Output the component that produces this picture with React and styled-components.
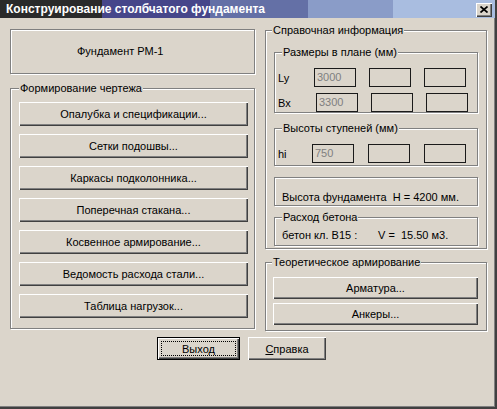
import React from 'react';
import styled, { createGlobalStyle } from 'styled-components';

const GlobalStyle = createGlobalStyle`
  html, body {
    margin: 0;
    padding: 0;
    background: #dbd5cb;
  }
  body {
    font-family: "Liberation Sans", Arial, sans-serif;
    font-size: 11px;
    color: #000;
  }
  * { box-sizing: border-box; }
`;

const face = '#dbd5cb';

const Window = styled.div`
  width: 497px;
  height: 409px;
  background: ${face};
  border-right: 2px solid #404040;
  border-bottom: 2px solid #404040;
  box-shadow: inset -1px -1px 0 #808080;
  display: flex;
  flex-direction: column;
`;

const TitleBar = styled.div`
  height: 18px;
  flex-shrink: 0;
  display: flex;
  align-items: center;
  justify-content: space-between;
  padding: 0 3px 0 6px;
  color: #fff;
  font-weight: bold;
  font-size: 12px;
  background: linear-gradient(
    to right,
    #2a2a2a 0px, #2a2a2a 102px,
    #46468a 102px, #46468a 210px,
    #6470a6 210px, #6470a6 308px,
    #8a9cc8 308px, #8a9cc8 393px,
    #a9bde0 393px
  );
`;

const CloseButton = styled.div`
  width: 16px;
  height: 14px;
  margin-top: 1px;
  background: ${face};
  box-shadow: inset 1px 1px 0 #fff, inset -1px -1px 0 #404040, inset -2px -2px 0 #808080;
  display: flex;
  align-items: center;
  justify-content: center;
`;

const Body = styled.div`
  padding: 11px 0 0 10px;
  display: flex;
  flex-direction: column;
`;

const Columns = styled.div`
  display: grid;
  grid-template-columns: 245px 222px;
  column-gap: 10px;
  align-items: start;
`;

const Column = styled.div`
  display: flex;
  flex-direction: column;
  gap: ${p => p.$gap}px;
`;

const Etched = styled.div`
  position: relative;
  border: 1px solid #808080;
  box-shadow: inset 1px 1px 0 #fff, 1px 1px 0 #fff;
`;

const InfoBox = styled(Etched)`
  height: 45px;
  display: flex;
  align-items: center;
  padding-left: 66px;
  padding-bottom: 1px;
`;

const Group = styled(Etched)`
  height: ${p => p.$h}px;
  padding: ${p => p.$pad};
  margin-top: ${p => p.$mt || 0}px;
  display: flex;
  flex-direction: column;
  gap: ${p => p.$gap || 0}px;
`;

const Legend = styled.span`
  position: absolute;
  top: -8px;
  left: ${p => p.$left}px;
  padding: 0 1px;
  line-height: 14px;
  background: ${face};
  white-space: nowrap;
`;

const Button = styled.button`
  width: ${p => p.$w}px;
  height: ${p => p.$h}px;
  padding: 0;
  border: none;
  background: ${face};
  font-family: inherit;
  font-size: 11px;
  color: #000;
  box-shadow: inset 1px 1px 0 #fff, inset -1px -1px 0 #404040, inset -2px -2px 0 #808080;
`;

const DefaultButton = styled(Button)`
  position: relative;
  border: 1px solid #000;
  &::after {
    content: '';
    position: absolute;
    inset: 3px;
    border: 1px dotted #000;
  }
`;

const Row = styled.div`
  display: flex;
  align-items: center;
  gap: ${p => p.$gap}px;
`;

const RowLabel = styled.span`
  width: ${p => p.$w}px;
  margin-right: ${p => -p.$gap}px;
  line-height: 14px;
`;

const Field = styled.div`
  width: 42px;
  height: 19px;
  border: 1px solid #1a1a1a;
  color: #808080;
  padding-left: 2px;
  line-height: 17px;
`;

const Line = styled.div`
  line-height: 14px;
  white-space: pre;
`;

const Cell = styled.span`
  display: inline-block;
  width: ${p => p.$w}px;
`;

const Footer = styled.div`
  display: flex;
  gap: 8px;
  margin-top: 6px;
  padding-left: 147px;
`;

const fields = (values, label, lw, gap) => (
  <Row $gap={gap}>
    <RowLabel $w={lw} $gap={gap}>{label}</RowLabel>
    {values.map((v, i) => <Field key={i}>{v}</Field>)}
  </Row>
);

const drawButtons = [
  'Опалубка и спецификации...',
  'Сетки подошвы...',
  'Каркасы подколонника...',
  'Поперечная стакана...',
  'Косвенное армирование...',
  'Ведомость расхода стали...',
  'Таблица нагрузок...',
];

export default function App() {
  return (
    <>
      <GlobalStyle />
      <Window>
        <TitleBar>
          <span>Конструирование столбчатого фундамента</span>
          <CloseButton>
            <svg width="8" height="7" viewBox="0 0 8 7">
              <path d="M0.5 0.5 L7.5 6.5 M7.5 0.5 L0.5 6.5" stroke="#000" strokeWidth="1.7" />
            </svg>
          </CloseButton>
        </TitleBar>
        <Body>
          <Columns>
            <Column $gap={14}>
              <InfoBox>Фундамент РМ-1</InfoBox>
              <Group $h={241} $pad="13px 6px 0 8px" $gap={8}>
                <Legend $left={8}>Формирование чертежа</Legend>
                {drawButtons.map(t => (
                  <Button key={t} $w={229} $h={24}>{t}</Button>
                ))}
              </Group>
            </Column>
            <Column $gap={13}>
              <Group $h={219} $pad="21px 8px 2px 8px" $mt={1}>
                <Legend $left={6}>Справочная информация</Legend>
                <Group $h={61} $pad="15px 0 0 3px" $gap={6}>
                  <Legend $left={7}>Размеры в плане (мм)</Legend>
                  {fields(['3000', '', ''], 'Ly', 36, 13)}
                  {fields(['3300', '', ''], 'Bx', 38, 13)}
                </Group>
                <Group $h={38} $pad="15px 0 0 3px" $mt={15}>
                  <Legend $left={7}>Высоты ступеней (мм)</Legend>
                  {fields(['750', '', ''], 'hi', 34, 14)}
                </Group>
                <Group as={Etched} $h={29} $pad="12px 0 0 7px" $mt={11}>
                  <Line>Высота фундамента  H = 4200 мм.</Line>
                </Group>
                <Group $h={29} $pad="10px 0 0 7px" $mt={11}>
                  <Legend $left={7}>Расход бетона</Legend>
                  <Line>
                    <Cell $w={96}>бетон кл. В15 :</Cell>V =  15.50 м3.
                  </Line>
                </Group>
              </Group>
              <Group $h={69} $pad="14px 0 0 7px" $gap={4}>
                <Legend $left={6}>Теоретическое армирование</Legend>
                <Button $w={205} $h={22}>Арматура...</Button>
                <Button $w={205} $h={22}>Анкеры...</Button>
              </Group>
            </Column>
          </Columns>
          <Footer>
            <DefaultButton $w={83} $h={23}>Выход</DefaultButton>
            <Button $w={78} $h={23}><u>С</u>правка</Button>
          </Footer>
        </Body>
      </Window>
    </>
  );
}
